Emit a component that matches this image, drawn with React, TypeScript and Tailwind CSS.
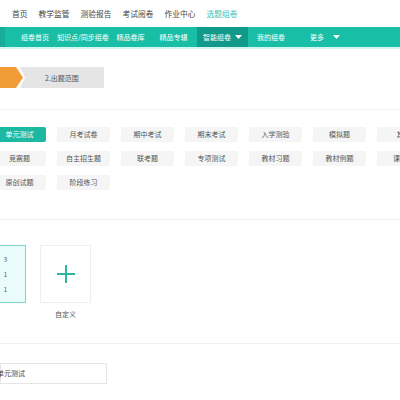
const TOP_NAV = ['首页', '教学监管', '测验报告', '考试阅卷', '作业中心'];

const SUB_NAV = [
	{ label: '组卷首页', w: 'w-[36px]', ml: 'ml-[12px]' },
	{ label: '知识点/同步组卷', w: 'w-[56px]', ml: 'ml-[2px]' },
	{ label: '精品卷库', w: 'w-[36px]', ml: 'ml-[1.5px]' },
	{ label: '精品专辑', w: 'w-[36px]', ml: 'ml-[7px]' },
];

const ROWS = [
	['单元测试', '月考试卷', '期中考试', '期末考试', '入学测验', '模拟题', '其他'],
	['竞赛题', '自主招生题', '联考题', '专项测试', '教材习题', '教材例题', '课时练'],
	['原创试题', '阶段练习'],
];

const Caret = () => (
	<svg width="7" height="4" viewBox="0 0 7 4" className="fill-white">
		<path d="M0 0 L7 0 L3.5 4 Z" />
	</svg>
);

export default function App() {
	return (
		<div className="h-[400px] w-[400px] overflow-hidden bg-white font-['Noto_Sans_CJK_SC','Noto_Sans',sans-serif]">
			{/* top nav */}
			<div className="flex h-[27px] items-center gap-[11px] pl-[12px] text-[7.75px] text-[#444]">
				{TOP_NAV.map((item) => (
					<span key={item}>{item}</span>
				))}
				<span className="text-[#3cc3b5]">选题组卷</span>
			</div>

			{/* sub nav */}
			<div className="flex h-[20px] items-stretch bg-[#19bea7] text-[7px] text-white">
				<div className="w-[5px] bg-[#17ad9a]" />
				{SUB_NAV.map((item) => (
					<div
						key={item.label}
						className={`flex items-center justify-center whitespace-nowrap ${item.w} ${item.ml}`}
					>
						{item.label}
					</div>
				))}
				<div className="ml-[5.5px] flex w-[51px] items-center justify-center gap-[4px] bg-[#11998a]">
					<span>智能组卷</span>
					<Caret />
				</div>
				<div className="ml-[9px] flex items-center">我的组卷</div>
				<div className="ml-[25px] flex items-center gap-[9px]">
					<span>更多</span>
					<Caret />
				</div>
			</div>
			<div className="h-[2px] bg-[#d3f5f1]" />

			{/* steps */}
			<div className="mt-[18px] flex h-[21px]">
				<svg width="104" height="21" viewBox="0 0 104 21">
					<path d="M20 0 L104 0 L104 21 L20 21 L25 10.5 Z" fill="#e5e5e5" />
					<path d="M0 0 L16 0 L23 10.5 L16 21 L0 21 Z" fill="#f29c38" />
					<text x="45" y="13.5" fontSize="7" fill="#555">
						2.出题范围
					</text>
				</svg>
			</div>

			<div className="mt-[21px] h-px bg-[#f2f2f2]" />

			{/* type buttons */}
			<div className="-ml-[7px] mt-[17px] flex flex-col gap-[9px]">
				{ROWS.map((row, r) => (
					<div key={r} className="flex gap-[11px]">
						{row.map((item) => {
							const active = item === '单元测试';
							return (
								<div
									key={item}
									className={`flex h-[15px] w-[53px] shrink-0 items-center justify-center rounded-[2px] text-[7px] ${
										active ? 'bg-[#1cb8a2] text-white' : 'bg-[#f5f5f5] text-[#555]'
									}`}
								>
									{item}
								</div>
							);
						})}
					</div>
				))}
			</div>

			<div className="mt-[29px] h-px bg-[#f0f0f0]" />

			{/* templates */}
			<div className="-ml-[24px] mt-[25px] flex gap-[14px]">
				<div className="flex h-[58px] w-[50px] flex-col items-end justify-center gap-[6px] border border-[#7fd3c8] bg-[#e9fbfb] pr-[18px] text-[6px] text-[#555]">
					<span>3</span>
					<span>1</span>
					<span>1</span>
				</div>
				<div className="flex flex-col items-center">
					<div className="flex h-[58px] w-[51px] items-center justify-center border border-[#eeeeee] bg-white">
						<svg width="18" height="18" viewBox="0 0 18 18">
							<path d="M9 0 V18 M0 9 H18" stroke="#2cb5a3" strokeWidth="2" />
						</svg>
					</div>
					<span className="mt-[6px] text-[7px] text-[#555]">自定义</span>
				</div>
			</div>

			<div className="mt-[23px] h-px bg-[#f0f0f0]" />

			{/* title input */}
			<div className="mt-[19px] flex h-[21px] w-[107px] items-center border border-[#e5e5e5]">
				<span className="-ml-[4px] text-[7px] text-[#444]">单元测试</span>
			</div>
		</div>
	);
}
